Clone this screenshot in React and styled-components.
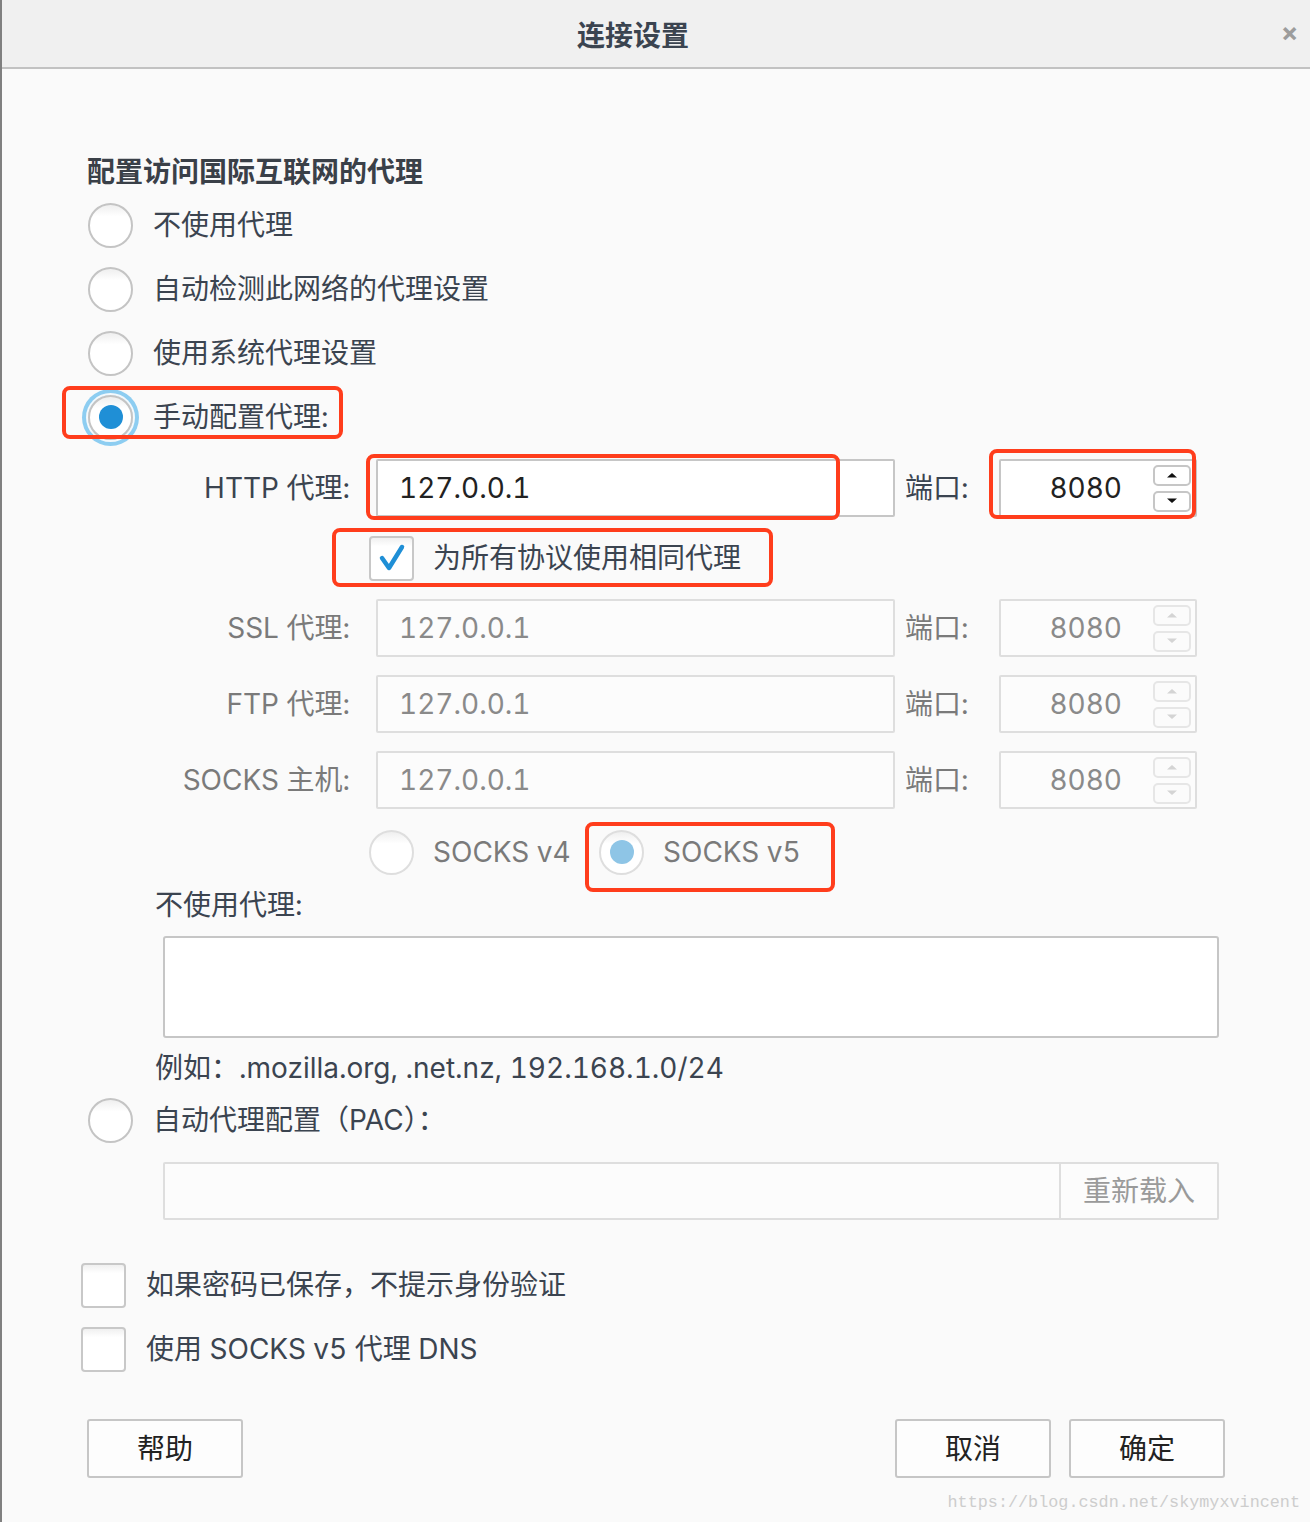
import React from 'react';
import styled, { createGlobalStyle } from 'styled-components';

const GlobalStyle = createGlobalStyle`
  html, body { margin: 0; padding: 0; background: #fafafa; }
  body {
    font-family: Inter, "Noto Sans CJK SC", sans-serif;
    font-variant-numeric: tabular-nums;
  }
  * { box-sizing: border-box; }
`;

const Dialog = styled.div`
  position: relative;
  width: 1310px;
  height: 1522px;
  background: #fafafa;
  border-left: 2px solid #808080;
  overflow: hidden;
  color: #3b4450;
  font-size: 28px;
  line-height: 36px;
`;

const TitleBar = styled.div`
  height: 69px;
  background: #f0f0f0;
  border-bottom: 2px solid #c2c2c2;
  display: grid;
  grid-template-columns: 575px auto 1fr;
  align-items: center;
  padding: 5px 12px 0 0;
`;

const Title = styled.div`
  grid-column: 2;
  font-weight: 700;
  font-size: 28px;
  color: #3b4450;
`;

const CloseX = styled.div`
  grid-column: 3;
  justify-self: end;
  font-size: 26px;
  font-weight: 700;
  color: #9c9c9c;
  margin-top: -6px;
`;

const Content = styled.div`
  padding: 85px 0 0 85px;
  display: flex;
  flex-direction: column;
  align-items: flex-start;
`;

const Heading = styled.div`
  font-weight: 700;
  color: #3a4048;
  margin-bottom: 3px;
`;

const OptionRow = styled.div`
  display: flex;
  align-items: center;
  height: ${p => p.$h || 64}px;
  gap: ${p => (p.$gap === undefined ? 20 : p.$gap)}px;
  margin-left: ${p => p.$indent || 0}px;
  margin-top: ${p => p.$mt || 0}px;
  color: ${p => (p.$disabled ? '#7f7f7f' : '#3b4450')};
`;

const RadioCircle = styled.span`
  flex: none;
  width: 45px;
  height: 45px;
  margin-left: ${p => (p.$small ? 0 : 1)}px;
  border-radius: 50%;
  border: 2px solid ${p => (p.$disabled ? '#dedede' : '#c4c4c4')};
  background: linear-gradient(#efefef, #ffffff 28%);
  display: flex;
  align-items: center;
  justify-content: center;
  box-shadow: ${p => (p.$focused ? '0 0 0 2px #f4f9fc, 0 0 0 6px #8dcdf1' : 'none')};
`;

const RadioDot = styled.span`
  width: 24px;
  height: 24px;
  border-radius: 50%;
  background: ${p => (p.$disabled ? '#8ec5e6' : '#1f8fd6')};
`;

const Radio = ({ checked, focused, disabled, small }) => (
  <RadioCircle $focused={focused} $disabled={disabled} $small={small}>
    {checked && <RadioDot $disabled={disabled} />}
  </RadioCircle>
);

const CheckBox = styled.span`
  flex: none;
  width: 45px;
  height: 45px;
  border: 2px solid #c8c8c8;
  border-radius: 4px;
  background: linear-gradient(#f0f0f0, #ffffff 20%);
  display: flex;
  align-items: center;
  justify-content: center;
`;

const ProxyBlock = styled.div`
  display: flex;
  flex-direction: column;
  gap: 18px;
  margin-top: 10px;
`;

const FieldRow = styled.div`
  display: flex;
  align-items: center;
  height: 58px;
`;

const FieldLabel = styled.div`
  width: 263px;
  margin-right: 26px;
  text-align: right;
  white-space: nowrap;
  color: ${p => (p.$disabled ? '#7a7a7a' : '#3b4450')};
`;

const TextField = styled.input`
  width: 519px;
  height: 58px;
  border: 2px solid ${p => (p.$disabled ? '#dedede' : '#c6c6c6')};
  border-radius: 2px;
  padding: 0 0 0 21px;
  font: inherit;
  font-size: 28px;
  color: ${p => (p.$disabled ? '#8a8a8a' : '#222')};
  background: ${p => (p.$disabled ? '#fcfcfc' : '#fff')};
  outline: none;
`;

const PortLabel = styled.div`
  width: 94px;
  margin-left: 10px;
  color: ${p => (p.$disabled ? '#7a7a7a' : '#3b4450')};
`;

const PortField = styled.div`
  width: 198px;
  height: 58px;
  border: 2px solid ${p => (p.$disabled ? '#dedede' : '#c6c6c6')};
  border-radius: 2px;
  background: ${p => (p.$disabled ? '#fcfcfc' : '#fff')};
  display: flex;
  align-items: center;
  padding-right: 4px;
`;

const PortValue = styled.div`
  flex: 1;
  text-align: right;
  padding-right: 31px;
  color: ${p => (p.$disabled ? '#8a8a8a' : '#222')};
`;

const Spinner = styled.div`
  width: 38px;
  display: flex;
  flex-direction: column;
  gap: 5px;
`;

const SpinButton = styled.div`
  height: 21px;
  border: 2px solid ${p => (p.$disabled ? '#e6e6e6' : '#c6c6c6')};
  border-radius: 5px;
  background: ${p => (p.$disabled ? '#fbfbfb' : '#fff')};
  display: flex;
  align-items: center;
  justify-content: center;
  color: ${p => (p.$disabled ? '#d4d4d4' : '#111')};
`;

const Arrow = ({ up }) => (
  <svg width="12" height="6" viewBox="0 0 12 6">
    <path d={up ? 'M1 5.5 L6 1 L11 5.5 Z' : 'M1 0.5 L6 5 L11 0.5 Z'} fill="currentColor" />
  </svg>
);

const Port = ({ value, disabled }) => (
  <PortField $disabled={disabled}>
    <PortValue $disabled={disabled}>{value}</PortValue>
    <Spinner>
      <SpinButton $disabled={disabled}><Arrow up /></SpinButton>
      <SpinButton $disabled={disabled}><Arrow /></SpinButton>
    </Spinner>
  </PortField>
);

const VersionOption = styled.div`
  display: flex;
  align-items: center;
  gap: 19px;
  width: ${p => p.$w}px;
  color: #7a7a7a;
`;

const SubLabel = styled.div`
  padding-left: 68px;
  margin-top: ${p => p.$mt || 0}px;
  white-space: nowrap;
`;

const TextArea = styled.textarea`
  display: block;
  margin: 13px 0 0 76px;
  width: 1056px;
  height: 102px;
  border: 2px solid #c6c6c6;
  border-radius: 3px;
  background: #fff;
  resize: none;
  outline: none;
`;

const PacField = styled.div`
  margin: 10px 0 0 76px;
  width: 1056px;
  height: 58px;
  border: 2px solid #dedede;
  border-radius: 2px;
  background: #fcfcfc;
  display: flex;
`;

const PacInput = styled.div`
  flex: 1;
`;

const ReloadButton = styled.div`
  width: 158px;
  border-left: 2px solid #dedede;
  display: flex;
  align-items: center;
  justify-content: center;
  color: #9a9a9a;
`;

const BottomChecks = styled.div`
  margin: 33px 0 0 -6px;
  display: flex;
  flex-direction: column;
`;

const ButtonBar = styled.div`
  margin-top: 38px;
  width: 1138px;
  display: flex;
  justify-content: space-between;
`;

const ButtonGroup = styled.div`
  display: flex;
  gap: 18px;
`;

const Button = styled.div`
  width: 156px;
  height: 59px;
  border: 2px solid #c6c6c6;
  border-radius: 3px;
  background: #fdfdfd;
  display: flex;
  align-items: center;
  justify-content: center;
  color: #222;
`;

const Mark = styled.div`
  position: absolute;
  left: ${p => p.$x - 2}px;
  top: ${p => p.$y}px;
  width: ${p => p.$w}px;
  height: ${p => p.$h}px;
  border: 4px solid #ff3d1c;
  border-radius: 8px;
  pointer-events: none;
`;

const Watermark = styled.div`
  position: absolute;
  right: 10px;
  bottom: 9px;
  font-family: "Liberation Mono", monospace;
  font-size: 16.8px;
  line-height: 20px;
  color: #cdcdcd;
`;

const disabledRows = [
  { label: 'SSL 代理:', host: '127.0.0.1', port: '8080' },
  { label: 'FTP 代理:', host: '127.0.0.1', port: '8080' },
  { label: 'SOCKS 主机:', host: '127.0.0.1', port: '8080' },
];

const marks = [
  { x: 62, y: 386, w: 281, h: 53 },
  { x: 366, y: 454, w: 474, h: 66 },
  { x: 989, y: 449, w: 207, h: 70 },
  { x: 332, y: 528, w: 441, h: 59 },
  { x: 585, y: 822, w: 250, h: 70 },
];

export default function App() {
  return (
    <>
      <GlobalStyle />
      <Dialog>
        <TitleBar>
          <Title>连接设置</Title>
          <CloseX>×</CloseX>
        </TitleBar>
        <Content>
          <Heading>配置访问国际互联网的代理</Heading>
          <OptionRow><Radio />不使用代理</OptionRow>
          <OptionRow><Radio />自动检测此网络的代理设置</OptionRow>
          <OptionRow><Radio />使用系统代理设置</OptionRow>
          <OptionRow><Radio checked focused />手动配置代理:</OptionRow>

          <ProxyBlock>
            <FieldRow>
              <FieldLabel>HTTP 代理:</FieldLabel>
              <TextField readOnly value="127.0.0.1" />
              <PortLabel>端口:</PortLabel>
              <Port value="8080" />
            </FieldRow>
            <OptionRow $h={46} $gap={19} $indent={282}>
              <CheckBox>
                <svg width="30" height="30" viewBox="0 0 30 30">
                  <path d="M5 15 L12 25 L25 4" fill="none" stroke="#1f8fd6" strokeWidth="4.5" strokeLinecap="round" strokeLinejoin="round" />
                </svg>
              </CheckBox>
              为所有协议使用相同代理
            </OptionRow>
            {disabledRows.map(r => (
              <FieldRow key={r.label}>
                <FieldLabel $disabled>{r.label}</FieldLabel>
                <TextField $disabled readOnly value={r.host} />
                <PortLabel $disabled>端口:</PortLabel>
                <Port value={r.port} disabled />
              </FieldRow>
            ))}
            <OptionRow $h={50} $gap={0} $indent={282}>
              <VersionOption $w={230}><Radio small disabled />SOCKS v4</VersionOption>
              <VersionOption $w={240}><Radio small disabled checked />SOCKS v5</VersionOption>
            </OptionRow>
          </ProxyBlock>

          <SubLabel $mt={10}>不使用代理:</SubLabel>
          <TextArea readOnly />
          <SubLabel $mt={12}>例如：.mozilla.org, .net.nz, 192.168.1.0/24</SubLabel>

          <OptionRow $mt={2}><Radio />自动代理配置（PAC）：</OptionRow>
          <PacField>
            <PacInput />
            <ReloadButton>重新载入</ReloadButton>
          </PacField>

          <BottomChecks>
            <OptionRow><CheckBox />如果密码已保存，不提示身份验证</OptionRow>
            <OptionRow><CheckBox />使用 SOCKS v5 代理 DNS</OptionRow>
          </BottomChecks>

          <ButtonBar>
            <Button>帮助</Button>
            <ButtonGroup>
              <Button>取消</Button>
              <Button>确定</Button>
            </ButtonGroup>
          </ButtonBar>
        </Content>

        {marks.map((m, i) => (
          <Mark key={i} $x={m.x} $y={m.y} $w={m.w} $h={m.h} />
        ))}
        <Watermark>https://blog.csdn.net/skymyxvincent</Watermark>
      </Dialog>
    </>
  );
}
